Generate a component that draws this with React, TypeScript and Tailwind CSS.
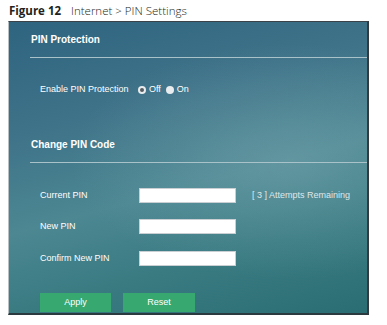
import React from "react";

function Radio({ checked }: { checked: boolean }) {
  return (
    <span className="inline-flex h-[8px] w-[8px] items-center justify-center rounded-full bg-[#e8ecee]">
      {checked && <span className="h-[4px] w-[4px] rounded-full bg-[#555b60]" />}
    </span>
  );
}

function Row({ label, extra, className }: { label: string; extra?: string; className?: string }) {
  return (
    <div className={"flex h-[15px] items-center pl-[31px] " + (className ?? "")}>
      <span className="w-[99px] text-[9px] text-white leading-[15px]">{label}</span>
      <div className="h-[15px] w-[97px] border border-[#c9cfd2] bg-white" />
      {extra && (
        <span className="ml-[16px] text-[9px] text-[#dfe8ea] leading-[15px]">{extra}</span>
      )}
    </div>
  );
}

export default function App() {
  return (
    <div className="h-[325px] w-[387px] bg-white" style={{ fontFamily: '"Liberation Sans", Arial, sans-serif' }}>
      <div className="flex h-[21px] items-start pl-[9px] pt-[3px] text-[11.5px] leading-[15px] text-[#231f20]" style={{ fontFamily: '"Open Sans", "Noto Sans", sans-serif' }}>
        <span className="font-bold">Figure 12</span>
        <span className="ml-[10px] font-light">Internet &gt; PIN Settings</span>
      </div>
      <div className="ml-[8px] h-[294px] w-[361px] border-l border-l-[#b8c0c4] border-t border-t-[#3b4248] border-r-2 border-r-[#343b40] border-b-2 border-b-[#2a3a3e] bg-[radial-gradient(ellipse_at_78%_48%,rgba(125,170,178,0.45),transparent_55%),linear-gradient(165deg,#2f6480_0%,#3f7389_30%,#4c8792_55%,#3a7b82_75%,#2a6e73_100%)]">
        <div className="pl-[22px] pt-[12px] text-[10px] font-bold leading-[12px] text-white">PIN Protection</div>
        <div className="ml-[21px] mt-[11px] h-px bg-[#a9c1c9]" />
        <div className="mt-[25px] flex h-[14px] items-center pl-[31px] text-[9px] text-white">
          <span className="w-[99px]">Enable PIN Protection</span>
          <span className="-ml-[1px] flex items-center">
            <Radio checked />
            <span className="ml-[3px]">Off</span>
          </span>
          <span className="ml-[5px] flex items-center">
            <Radio checked={false} />
            <span className="ml-[3px]">On</span>
          </span>
        </div>
        <div className="mt-[42px] pl-[22px] text-[10px] font-bold leading-[12px] text-white">Change PIN Code</div>
        <div className="ml-[21px] mt-[11px] h-px bg-[#a9c1c9]" />
        <Row label="Current PIN" extra="[ 3 ] Attempts Remaining" className="mt-[25px]" />
        <Row label="New PIN" className="mt-[16px]" />
        <Row label="Confirm New PIN" className="mt-[17px]" />
        <div className="mt-[27px] flex gap-[12px] pl-[31px]">
          <button className="h-[19px] w-[71px] bg-[#38a871] text-[9px] text-white">Apply</button>
          <button className="h-[19px] w-[72px] bg-[#38a871] text-[9px] text-white">Reset</button>
        </div>
      </div>
    </div>
  );
}
